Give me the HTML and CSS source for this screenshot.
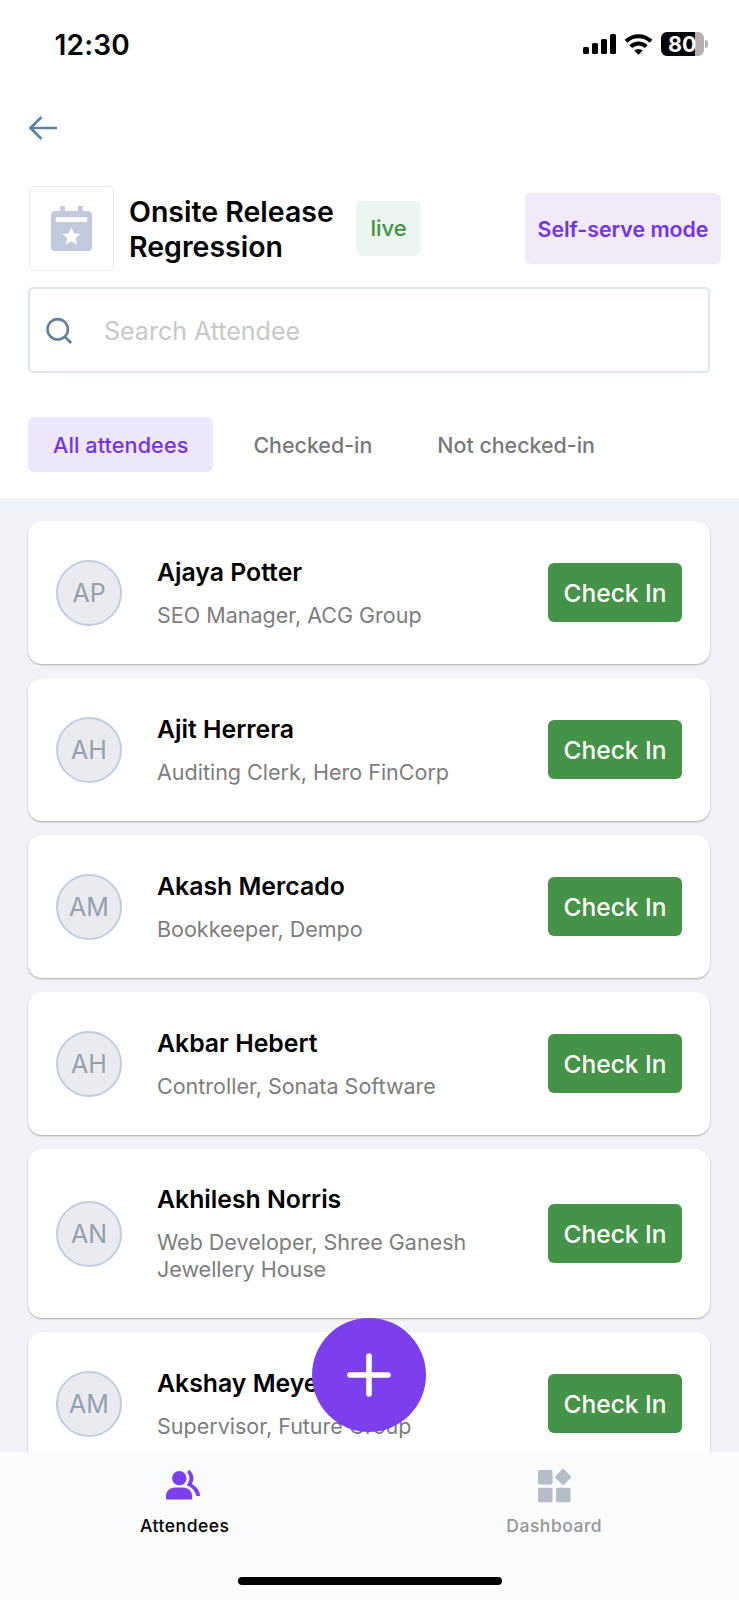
FILE: index.html
```html
<!DOCTYPE html>
<html lang="en">
<head>
    <meta charset="UTF-8">
    <meta name="viewport" content="width=device-width, initial-scale=1.0">
    <title>Onsite Release Regression</title>
    <link rel="stylesheet" href="styles.css">
</head>
<body>
    <header class="header">
        <div class="status-bar">
            <span class="time">12:30</span>
            <div class="status-icons">
                <svg width="33" height="20" viewBox="0 0 33 20">
                    <rect x="0" y="13" width="6" height="7" rx="1.5"/>
                    <rect x="9" y="9" width="6" height="11" rx="1.5"/>
                    <rect x="18" y="5" width="6" height="15" rx="1.5"/>
                    <rect x="27" y="0" width="6" height="20" rx="1.5"/>
                </svg>
                <svg class="wifi" width="29" height="21" viewBox="0 0 29 21">
                    <path d="M2 7.2a18 18 0 0 1 25 0M6.8 12.6a11 11 0 0 1 15.4 0" fill="none" stroke="#000" stroke-width="4"/>
                    <path d="M14.5 20.8l-4.2-4.2a6.3 6.3 0 0 1 8.4 0z"/>
                </svg>
                <div class="battery"><span>80</span></div>
                <div class="battery-tip"></div>
            </div>
        </div>

        <button class="back-btn" aria-label="Back">
            <svg width="29" height="24" viewBox="0 0 29 24" fill="none" stroke="#64809f" stroke-width="2.7">
                <path d="M28 12H2M12.5 1L1.5 12l11 11"/>
            </svg>
        </button>

        <div class="event">
            <div class="event-logo">
                <svg width="41" height="45" viewBox="0 0 41 45">
                    <path fill="#c0cadc" d="M9.3 0H14v5h13V0h4.7v5H37a4 4 0 0 1 4 4v32a4 4 0 0 1-4 4H4a4 4 0 0 1-4-4V9a4 4 0 0 1 4-4h5.3z"/>
                    <path fill="#fff" d="M4.700 11.300h31.400V16H4.700zM20.400 21.300l2.600 6 6.500.6-4.900 4.300 1.400 6.400-5.600-3.400-5.600 3.400 1.400-6.400-4.900-4.300 6.500-.6z"/>
                </svg>
            </div>
            <h1 class="event-title">Onsite Release Regression</h1>
            <span class="badge">live</span>
            <button class="self-serve">Self-serve mode</button>
        </div>

        <div class="search">
            <svg width="27" height="27" viewBox="0 0 27 27" fill="none" stroke="#64809f" stroke-width="2.6">
                <circle cx="11.7" cy="12.3" r="10.2"/>
                <path d="M19 19.800l6.200 6.200"/>
            </svg>
            <span class="placeholder">Search Attendee</span>
        </div>

        <div class="tabs">
            <button class="tab active">All attendees</button>
            <button class="tab">Checked-in</button>
            <button class="tab">Not checked-in</button>
        </div>
    </header>

    <main class="list">
        <div class="card">
            <div class="avatar">AP</div>
            <div class="info">
                <div class="name">Ajaya Potter</div>
                <div class="role">SEO Manager, ACG Group</div>
            </div>
            <button class="check-in">Check In</button>
        </div>
        <div class="card">
            <div class="avatar">AH</div>
            <div class="info">
                <div class="name">Ajit Herrera</div>
                <div class="role">Auditing Clerk, Hero FinCorp</div>
            </div>
            <button class="check-in">Check In</button>
        </div>
        <div class="card">
            <div class="avatar">AM</div>
            <div class="info">
                <div class="name">Akash Mercado</div>
                <div class="role">Bookkeeper, Dempo</div>
            </div>
            <button class="check-in">Check In</button>
        </div>
        <div class="card">
            <div class="avatar">AH</div>
            <div class="info">
                <div class="name">Akbar Hebert</div>
                <div class="role">Controller, Sonata Software</div>
            </div>
            <button class="check-in">Check In</button>
        </div>
        <div class="card">
            <div class="avatar">AN</div>
            <div class="info">
                <div class="name">Akhilesh Norris</div>
                <div class="role">Web Developer, Shree Ganesh Jewellery House</div>
            </div>
            <button class="check-in">Check In</button>
        </div>
        <div class="card">
            <div class="avatar">AM</div>
            <div class="info">
                <div class="name">Akshay Meyer</div>
                <div class="role">Supervisor, Future Group</div>
            </div>
            <button class="check-in">Check In</button>
        </div>
    </main>

    <button class="fab" aria-label="Add attendee">
        <svg width="44" height="44" viewBox="0 0 44 44" fill="none" stroke="#fff" stroke-width="5.6" stroke-linecap="round">
            <path d="M22 3v38M3 22h38"/>
        </svg>
    </button>

    <nav class="bottom-nav">
        <div class="nav-items">
            <div class="nav-item active">
                <svg width="38" height="34" viewBox="0 0 38 34" fill="#7c3fee">
                    <circle cx="13.3" cy="9.2" r="7.2"/>
                    <path d="M0 30.500V27.500C0 22 4 18.500 9 18.500h8c5 0 9.200 3.500 9.200 9v3z"/>
                    <path d="M23 .8c5 4 5.500 10 2.800 14.200 4.500 2.500 8.200 6.500 8.200 12h-3.700c-.8-5-4.500-9-9.700-10.800 3.300-3.700 4-8.200.6-12.600z"/>
                </svg>
                <span>Attendees</span>
            </div>
            <div class="nav-item">
                <svg width="34" height="34" viewBox="0 0 34 34" fill="#b5bdc9">
                    <rect x="1" y="1" width="14.500" height="14.500" rx="1.500"/>
                    <rect x="1" y="18.700" width="14.500" height="14.500" rx="1.500"/>
                    <rect x="19" y="18.700" width="14.500" height="14.500" rx="1.500"/>
                    <rect x="20.100" y="2" width="12" height="12" rx="1" transform="rotate(45 26.100 8)"/>
                </svg>
                <span>Dashboard</span>
            </div>
        </div>
        <div class="home-indicator"></div>
    </nav>
</body>
</html>
```
FILE: styles.css
```css
* {
    box-sizing: border-box;
}

body {
    margin: 0;
    height: 1600px;
    display: flex;
    flex-direction: column;
    position: relative;
    overflow: hidden;
    font-family: Inter, sans-serif;
    color: #000;
    background-color: #f2f3f8;
}

button {
    border: none;
    padding: 0;
    font-family: inherit;
    cursor: pointer;
}

svg {
    display: block;
    flex-shrink: 0;
}

.header {
    flex-shrink: 0;
    height: 498px;
    background-color: #fff;
}

/* Status bar */
.status-bar {
    display: flex;
    justify-content: space-between;
    align-items: center;
    height: 88px;
    padding: 0 31px 0 54.5px;
}

.time {
    padding-top: 1px;
    font-size: 28px;
    font-weight: 600;
    letter-spacing: 0.2px;
}

.status-icons {
    display: flex;
    align-items: center;
}

.wifi {
    margin: 0 8px;
}

.battery {
    width: 43px;
    height: 24px;
    border-radius: 6px;
    background: linear-gradient(to right, #000 34px, #b0b0b0 34px);
    color: #fff;
    font-size: 21.5px;
    font-weight: 700;
    line-height: 25px;
    padding-left: 7px;
}

.battery-tip {
    width: 3px;
    height: 8px;
    margin-left: 1px;
    border-radius: 0 3px 3px 0;
    background-color: #b0b0b0;
}

.back-btn {
    display: block;
    height: 24px;
    margin: 28px 0 0 28.5px;
    background: none;
}

/* Event */
.event {
    display: flex;
    align-items: center;
    height: 85px;
    margin: 46px 18px 0 29px;
}

.event-logo {
    display: flex;
    align-items: center;
    justify-content: center;
    width: 85px;
    height: 85px;
    border: 1px solid #e9ebf2;
    border-radius: 5px;
}

.event-title {
    width: 227px;
    margin: 0 0 0 15px;
    font-size: 28.5px;
    font-weight: 600;
    line-height: 35px;
}

.badge {
    width: 65px;
    height: 55px;
    border-radius: 7px;
    background-color: #ecf6f0;
    color: #449248;
    font-size: 22px;
    font-weight: 500;
    line-height: 55px;
    text-align: center;
}

.self-serve {
    width: 196px;
    height: 71px;
    margin-left: auto;
    border-radius: 6px;
    background-color: #f1eafb;
    color: #7532ea;
    font-size: 21.3px;
    font-weight: 600;
}

.search {
    display: flex;
    align-items: center;
    height: 86px;
    margin: 16px 29px 0 28px;
    padding-left: 16px;
    border: 2px solid #dde5ef;
    border-radius: 5px;
}

.placeholder {
    margin: 2px 0 0 31px;
    font-size: 25px;
    color: #c8c8c8;
}

.tabs {
    display: flex;
    margin: 44px 28px 0;
}

.tab {
    height: 55px;
    padding: 0 25px;
    margin-right: 15px;
    border-radius: 6px;
    background: none;
    color: #787878;
    font-size: 21.4px;
    font-weight: 500;
}

.tab.active {
    background-color: #ede7fc;
    color: #7532ea;
    font-size: 21.6px;
    letter-spacing: 0.1px;
}

/* Attendees */
.list {
    flex: 1;
    min-height: 0;
    overflow: hidden;
    display: flex;
    flex-direction: column;
    gap: 14.1px;
    padding: 23px 29px 0 28px;
    background: linear-gradient(#f0f3f9 14px, #f2f3f8 14px);
}

.card {
    flex-shrink: 0;
    display: flex;
    align-items: center;
    min-height: 143px;
    padding: 31px 28px;
    border-radius: 14px;
    background-color: #fff;
    box-shadow: 0 1px 2px rgba(0, 0, 0, 0.3);
}

.avatar {
    flex-shrink: 0;
    width: 66px;
    height: 66px;
    border: 2px solid #c0cde0;
    border-radius: 50%;
    background-color: #eaebf0;
    color: #959fad;
    font-size: 25px;
    font-weight: 400;
    line-height: 63px;
    text-align: center;
}

.info {
    width: 350px;
    margin-left: 35px;
}

.name {
    font-size: 24.8px;
    font-weight: 600;
    line-height: 38px;
}

.role {
    margin-top: 11px;
    padding-bottom: 4px;
    font-size: 21.5px;
    line-height: 27px;
    color: #7d7d7d;
}

.check-in {
    flex-shrink: 0;
    width: 134px;
    height: 59px;
    margin-left: auto;
    border-radius: 6px;
    background-color: #459349;
    color: #fff;
    font-size: 24.5px;
    font-weight: 500;
}

/* Sits over the list */
.fab {
    position: absolute;
    left: 312px;
    bottom: 168px;
    display: flex;
    align-items: center;
    justify-content: center;
    width: 114px;
    height: 114px;
    border-radius: 50%;
    background-color: #7c3fee;
}

/* Bottom navigation */
.bottom-nav {
    flex-shrink: 0;
    display: flex;
    flex-direction: column;
    align-items: center;
    justify-content: space-between;
    height: 148px;
    padding: 17px 0 15px;
    background-color: #fafbfd;
}

.nav-items {
    display: flex;
    width: 100%;
}

.nav-item {
    flex: 1;
    display: flex;
    flex-direction: column;
    align-items: center;
    gap: 12px;
    font-size: 17.5px;
    font-weight: 500;
    letter-spacing: 0.5px;
    color: #969696;
}

.nav-item.active {
    color: #000;
}

.home-indicator {
    width: 264px;
    height: 8px;
    border-radius: 4px;
    background-color: #000;
}
```
